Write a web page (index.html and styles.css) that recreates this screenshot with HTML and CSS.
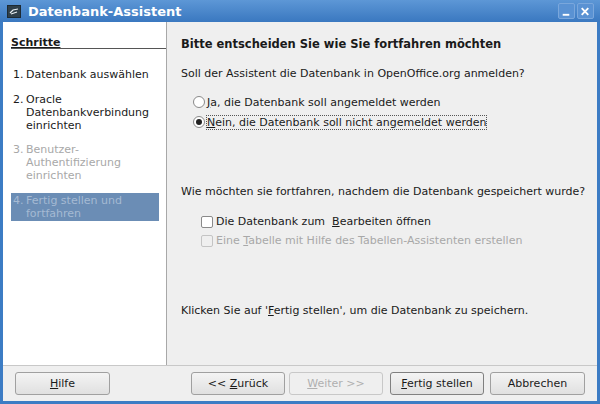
FILE: index.html
```html
<!DOCTYPE html>
<html>
<head>
<meta charset="utf-8">
<link rel="stylesheet" href="styles.css">
</head>
<body>
<div class="window">
  <div class="titlebar">
    <svg class="appicon" width="14" height="13" viewBox="0 0 14 13">
      <rect x="0.5" y="0.5" width="13" height="12" fill="#2f3f4a" stroke="#1d2a33"/>
      <path d="M3 8 L6 5 L11 4 M4 9 L10 7" stroke="#e8eef2" stroke-width="1.2" fill="none"/>
    </svg>
    <span class="title">Datenbank-Assistent</span>
    <div class="wbtns">
      <div class="wbtn"><svg width="17" height="15" viewBox="0 0 17 15"><rect x="5" y="10" width="7" height="2" fill="#fff"/></svg></div>
      <div class="wbtn"><svg width="17" height="15" viewBox="0 0 17 15"><path d="M5 4 L12 11 M12 4 L5 11" stroke="#fff" stroke-width="2"/></svg></div>
    </div>
  </div>
  <div class="client">
    <div class="main">
      <div class="steps">
        <div class="steps-head">Schritte</div>
        <div class="step first"><span class="num">1.</span><span>Datenbank auswählen</span></div>
        <div class="step"><span class="num">2.</span><span>Oracle Datenbankverbindung einrichten</span></div>
        <div class="step disabled"><span class="num">3.</span><span>Benutzer-<br>Authentifizierung einrichten</span></div>
        <div class="step current"><span class="num">4.</span><span>Fertig stellen und fortfahren</span></div>
      </div>
      <div class="page">
        <div class="page-head">Bitte entscheiden Sie wie Sie fortfahren möchten</div>
        <div class="q1">Soll der Assistent die Datenbank in OpenOffice.org anmelden?</div>
        <div class="opts">
          <div class="opt"><span class="radio"></span><span><u>J</u>a, die Datenbank soll angemeldet werden</span></div>
          <div class="opt"><span class="radio on"></span><span class="focus"><u>N</u>ein, die Datenbank soll nicht angemeldet werden</span></div>
        </div>
        <div class="q2">Wie möchten sie fortfahren, nachdem die Datenbank gespeichert wurde?</div>
        <div class="checks">
          <div class="opt"><span class="check"></span><span>Die Datenbank zum &nbsp;<u>B</u>earbeiten öffnen</span></div>
          <div class="opt disabled"><span class="check"></span><span>Eine <u>T</u>abelle mit Hilfe des Tabellen-Assistenten erstellen</span></div>
        </div>
        <div class="finish">Klicken Sie auf '<u>F</u>ertig stellen', um die Datenbank zu speichern.</div>
      </div>
    </div>
    <div class="buttons">
      <button class="btn help"><u>H</u>ilfe</button>
      <div class="spacer"></div>
      <button class="btn">&lt;&lt; <u>Z</u>urück</button>
      <button class="btn next" disabled><u>W</u>eiter &gt;&gt;</button>
      <button class="btn default"><u>F</u>ertig stellen</button>
      <button class="btn cancel">Abbrechen</button>
    </div>
  </div>
</div>
</body>
</html>
```
FILE: styles.css
```css
* { box-sizing: border-box; }
html, body { margin: 0; padding: 0; }
body {
  width: 600px; height: 404px; overflow: hidden;
  font-family: "DejaVu Sans", sans-serif;
  font-size: 11px;
  color: #1a1a1a;
}
.window {
  width: 600px; height: 404px;
  background: #3c7cc4;
  display: flex; flex-direction: column;
  padding: 0 3px 3px 3px;
}
.titlebar {
  height: 22px;
  margin: 0 -3px;
  padding: 0 6px 0 7px;
  background: linear-gradient(#5d97d6, #3a78c0);
  display: flex; align-items: center;
}
.appicon { margin-right: 7px; margin-top: 1px; }
.title { color: #fff; font-weight: bold; font-size: 13px; flex: 1; }
.wbtns { display: flex; gap: 2px; }
.wbtn {
  width: 17px; height: 16px;
  border: 1px solid #7aa7dc;
  border-radius: 2px;
  background: #5a92d3;
  display: flex;
}
.wbtn svg { margin: -0.5px 0 0 -1px; }
.client {
  flex: 1;
  background: #efefef;
  display: flex; flex-direction: column;
}
.main {
  height: 344px;
  display: flex;
  border-bottom: 1px solid #c8c8c8;
}
.steps {
  width: 164px;
  background: #fff;
  border-right: 1px solid #a8a8a8;
  padding: 14px 0 0 8px;
}
.steps-head {
  font-weight: bold;
  text-decoration: underline;
  border-bottom: 1px solid #555;
  height: 13px;
  line-height: 13px;
  margin-bottom: 19px;
}
.step {
  display: flex;
  line-height: 13px;
  width: 148px;
  padding: 0 2px;
  margin-bottom: 11px;
}
.step.first { margin-bottom: 12px; }
.step .num { width: 13px; flex: none; }
.step.disabled { color: #a8a8a8; }
.step.current {
  background: #6b8db5;
  color: #a5bad3;
  padding-top: 1px; padding-bottom: 1px;
}
.page {
  flex: 1;
  padding: 15px 0 0 14px;
}
.page-head { font-weight: bold; font-size: 11.5px; line-height: 14px; margin-bottom: 16px; }
.q1 { line-height: 14px; margin-bottom: 11px; }
.opts { padding-left: 12px; }
.opt { display: flex; align-items: center; height: 20px; }
.checks .opt { height: 19px; }
.radio {
  width: 12px; height: 12px; border-radius: 50%;
  border: 1px solid #8a8a8a;
  background: #fff;
  margin-right: 2px;
  position: relative;
}
.radio.on::after {
  content: ""; position: absolute; left: 2px; top: 2px;
  width: 6px; height: 6px; border-radius: 50%; background: #222;
}
.focus { outline: 1px dotted #555; outline-offset: 0; }
.q2 { line-height: 14px; margin-top: 53px; margin-bottom: 13px; }
.checks { padding-left: 20px; }
.check {
  width: 12px; height: 12px;
  border: 1px solid #8a8a8a; border-radius: 2px;
  background: #fff;
  margin-right: 3px;
}
.opt.disabled { color: #a8a8a8; }
.opt.disabled .check { border-color: #c4c4c4; background: #efefef; }
.finish { line-height: 14px; margin-top: 54px; }
.buttons {
  flex: 1;
  display: flex; align-items: center;
  padding: 0 12px 0 12px;
  gap: 4px;
}
.spacer { flex: 1; }
.btn {
  width: 94px; height: 23px;
  font-family: "DejaVu Sans", sans-serif;
  font-size: 11px;
  color: #1a1a1a;
  border: 1px solid #a0a0a0;
  border-radius: 3px;
  background: linear-gradient(#f4f4f4, #e0e0e0);
  padding: 0;
}
.btn.help { width: 95px; }
.btn.cancel { width: 95px; }
.btn[disabled] { color: #b0b0b0; border-color: #c8c8c8; background: #efefef; }
.btn.next { margin-right: 3px; }
.btn.default { border-color: #808080; margin-right: 2px; }
```
